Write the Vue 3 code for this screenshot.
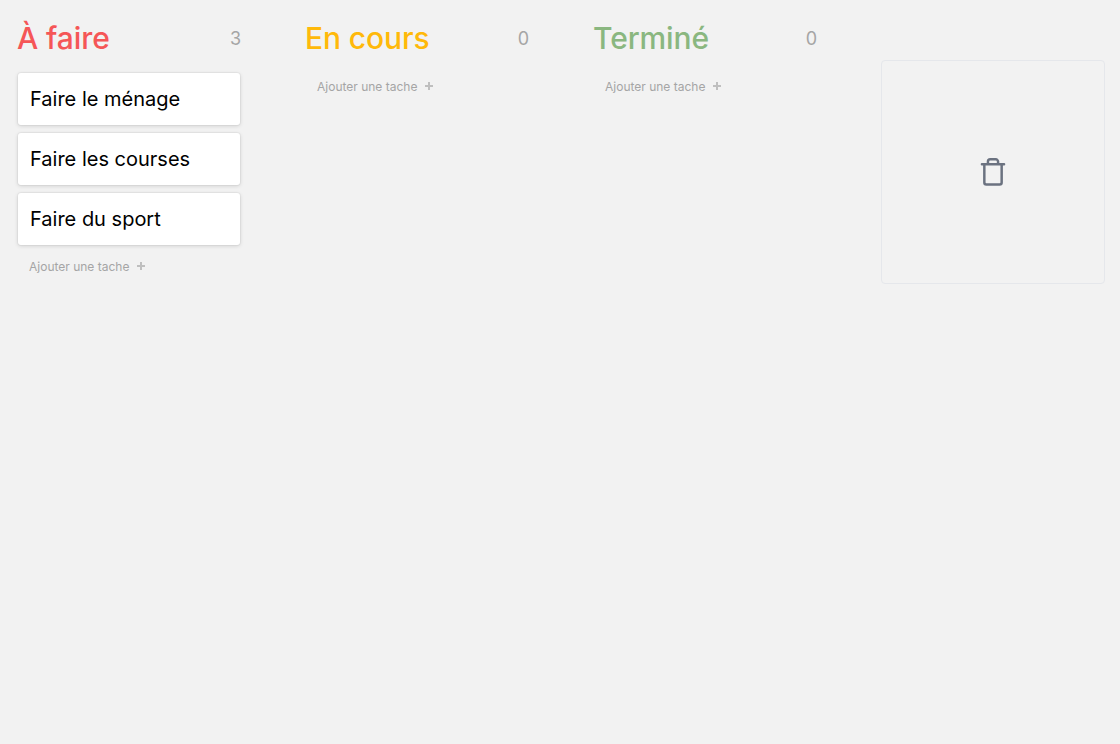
<script setup>
const columns = [
  { title: 'À faire', color: 'red', tasks: ['Faire le ménage', 'Faire les courses', 'Faire du sport'] },
  { title: 'En cours', color: 'yellow', tasks: [] },
  { title: 'Terminé', color: 'green', tasks: [] },
]
</script>

<template>
  <main class="board">
    <section v-for="column in columns" :key="column.title" class="column">
      <header class="head">
        <h2 :class="['title', column.color]">{{ column.title }}</h2>
        <span class="count">{{ column.tasks.length }}</span>
      </header>
      <div class="tasks">
        <div v-for="task in column.tasks" :key="task" class="card">{{ task }}</div>
        <button class="add">
          <span>Ajouter une tache</span>
          <svg width="8" height="8" viewBox="0 0 8 8" fill="none" stroke="currentColor" stroke-width="2" opacity=".65"><path d="M4 0v8M0 4h8" /></svg>
        </button>
      </div>
    </section>
    <div class="trash">
      <svg width="32" height="32" viewBox="0 0 24 24" fill="none" stroke="currentColor" stroke-width="1.85" stroke-linecap="round" stroke-linejoin="round">
        <path d="M5.5 6.2v13.6a1.5 1.5 0 0 0 1.5 1.5h10a1.5 1.5 0 0 0 1.5-1.5V6.2M3.7 6.2h16.6M8.2 6.2V4.2a1.7 1.7 0 0 1 1.7-1.7h4.2a1.7 1.7 0 0 1 1.7 1.7v2" />
      </svg>
    </div>
  </main>
</template>

<style>
html, body { margin: 0; background: #f2f2f2; }
</style>

<style scoped>
.board {
  box-sizing: border-box;
  min-height: 744px;
  display: grid;
  grid-template-columns: repeat(4, 224px);
  column-gap: 64px;
  align-items: start;
  padding: 16px 0 0 17px;
  font-family: Inter, sans-serif;
  overflow: hidden;
}
.head { display: flex; justify-content: space-between; align-items: center; height: 45px; margin-bottom: 12px; }
.title { margin: 0; font-size: 30px; line-height: 45px; font-weight: 500; letter-spacing: -.1px; }
.red { color: #f55657; }
.yellow { color: #ffb90a; }
.green { color: #8ab780; }
.count { font-size: 18px; line-height: 28px; color: #a5a5a5; }
.tasks { display: flex; flex-direction: column; gap: 8px; }
.card {
  box-sizing: border-box;
  height: 52px;
  margin: 0 1px;
  padding: 0 12px;
  border-radius: 3px;
  background: #fff;
  box-shadow: 0 0 0 1px rgba(0, 0, 0, .03), 0 1px 4px rgba(0, 0, 0, .14);
  color: #000;
  font-size: 20px;
  line-height: 52px;
}
.add { display: flex; align-items: center; gap: 8px; border: 0; padding: 5px 0 0 12px; background: none; color: #a5a5a5; font: 12px/18px Inter, sans-serif; }
.add svg { margin-top: -2px; }
.trash { box-sizing: border-box; display: flex; align-items: center; justify-content: center; width: 224px; height: 224px; margin-top: 44px; border: 1px solid #e5e7eb; border-radius: 4px; color: #6b7280; }
</style>
